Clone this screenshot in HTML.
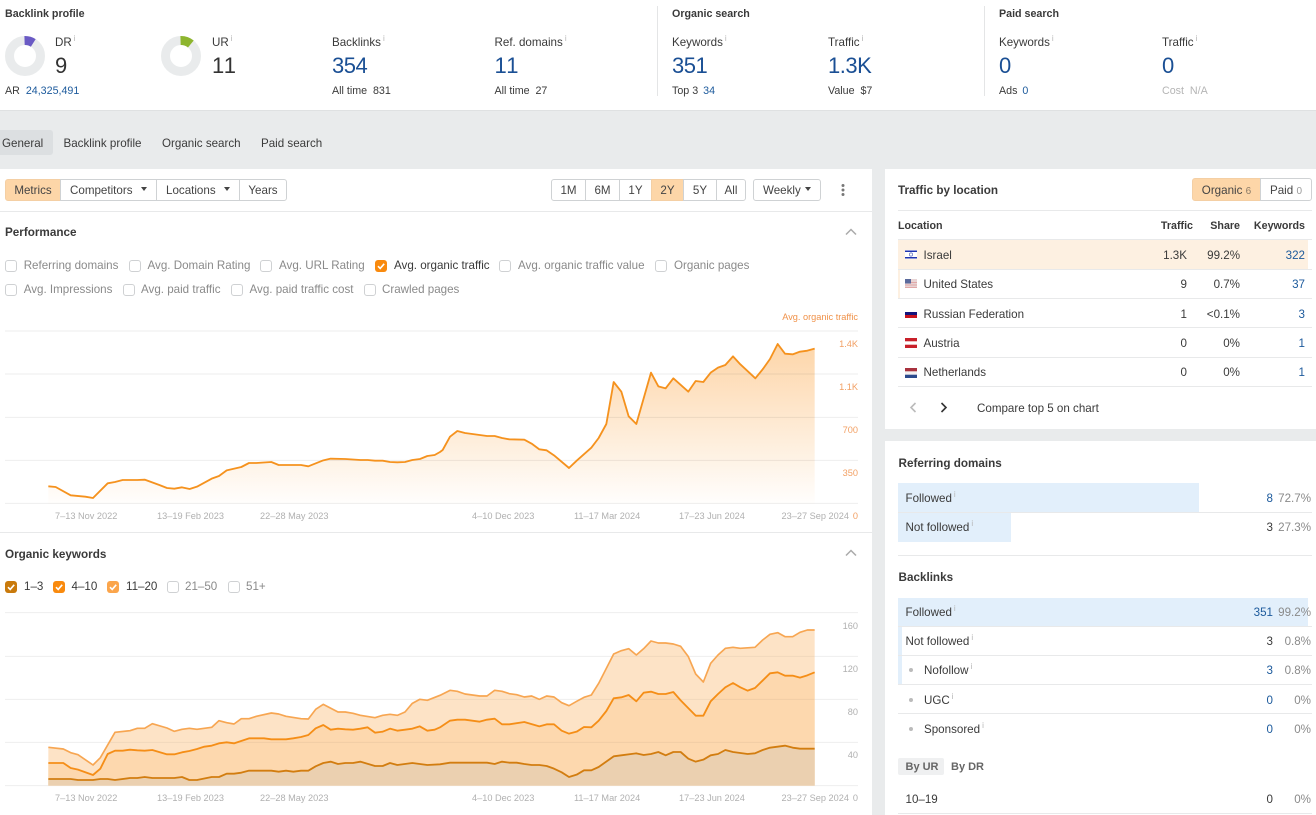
<!DOCTYPE html>
<html><head><meta charset="utf-8"><style>
html,body{margin:0;padding:0}
body{width:1316px;height:815px;overflow:hidden;background:#e9ebec;position:relative;font-family:"Liberation Sans",Arial,sans-serif;font-size:11.6px;color:#3a3a3a}
.b{position:absolute;box-sizing:border-box}
.t{position:absolute;line-height:16px;white-space:nowrap;margin-top:1px}
.r{text-align:right;transform:translateX(-100%)}
.h{font-weight:bold;color:#3a3a3a;font-size:11.7px}
.h2{font-size:10.7px;margin-top:0}
.m{font-size:10.7px;margin-top:0}
.big{font-size:22px;line-height:26px;color:#333;font-kerning:none;letter-spacing:-.5px;margin-top:0}
.bl{color:#1a4f94}
.l{color:#1c5a9c}
.g{color:#8a8a8a}
.s{font-size:9.2px;color:#b0b0b0;margin-top:0}
.o{color:#f2a064}
.i{font-size:8px;color:#b5b5b5;position:relative;top:-5px;margin-left:2px}
.cb{position:absolute;width:12px;height:12px;box-sizing:border-box;border:1px solid #cfd1d3;border-radius:3px;background:#fff}
.ck{border:0}
.ck svg{display:block}
.btn{position:absolute;box-sizing:border-box;height:22px;background:#fff;border:1px solid #cfd2d4;line-height:22px;text-align:center;color:#444}
.ln{position:absolute;height:1px;background:#e8e9ea}
.sel{background:#fdd6a8}
.fl{position:absolute;left:905px;width:12px}
.dot{position:absolute;width:4px;height:4px;border-radius:2px;background:#bbb;left:909px}
</style></head><body>
<div class="b" style="left:0;top:0;width:1316px;height:111px;background:#fff;border-bottom:1px solid #dfe1e2"></div>
<div class="b" style="left:657px;top:6px;width:1px;height:90px;background:#e4e5e6"></div>
<div class="b" style="left:984px;top:6px;width:1px;height:90px;background:#e4e5e6"></div>

<svg class="b" style="left:0;top:30px" width="210" height="52" viewBox="0 0 210 52">
<circle cx="25" cy="26" r="15.5" fill="none" stroke="#e9ebec" stroke-width="9"/>
<circle cx="25" cy="26" r="15.5" fill="none" stroke="#6a5ac4" stroke-width="9" pathLength="100" stroke-dasharray="9 91" transform="rotate(-90 25 26)"/>
<circle cx="181" cy="26" r="15.5" fill="none" stroke="#e9ebec" stroke-width="9"/>
<circle cx="181" cy="26" r="15.5" fill="none" stroke="#8db52e" stroke-width="9" pathLength="100" stroke-dasharray="11 89" transform="rotate(-90 181 26)"/>
</svg>

<div class="t h h2" style="left:5px;top:6px">Backlink profile</div>
<div class="t h h2" style="left:672px;top:6px">Organic search</div>
<div class="t h h2" style="left:999px;top:6px">Paid search</div>

<div class="t" style="left:55px;top:34px">DR<span class="i">i</span></div>
<div class="t big" style="left:55px;top:53px">9</div>
<div class="t m" style="left:5px;top:83px">AR <span class="l" style="margin-left:3px">24,325,491</span></div>
<div class="t" style="left:212px;top:34px">UR<span class="i">i</span></div>
<div class="t big" style="left:212px;top:53px">11</div>
<div class="t" style="left:332px;top:34px">Backlinks<span class="i">i</span></div>
<div class="t big bl" style="left:332px;top:53px">354</div>
<div class="t m" style="left:332px;top:83px">All time&nbsp; 831</div>
<div class="t" style="left:494.5px;top:34px">Ref. domains<span class="i">i</span></div>
<div class="t big bl" style="left:494.5px;top:53px">11</div>
<div class="t m" style="left:494.5px;top:83px">All time&nbsp; 27</div>
<div class="t" style="left:672px;top:34px">Keywords<span class="i">i</span></div>
<div class="t big bl" style="left:672px;top:53px">351</div>
<div class="t m" style="left:672px;top:83px">Top 3 <span class="l" style="margin-left:2px">34</span></div>
<div class="t" style="left:828px;top:34px">Traffic<span class="i">i</span></div>
<div class="t big bl" style="left:828px;top:53px">1.3K</div>
<div class="t m" style="left:828px;top:83px">Value&nbsp; $7</div>
<div class="t" style="left:999px;top:34px">Keywords<span class="i">i</span></div>
<div class="t big bl" style="left:999px;top:53px">0</div>
<div class="t m" style="left:999px;top:83px">Ads <span class="l" style="margin-left:2px">0</span></div>
<div class="t" style="left:1162px;top:34px">Traffic<span class="i">i</span></div>
<div class="t big bl" style="left:1162px;top:53px">0</div>
<div class="t m" style="left:1162px;top:83px;color:#b5b5b5">Cost&nbsp; N/A</div>

<div class="b" style="left:0;top:130px;width:53px;height:25px;background:#dcdfe1;border-radius:0 3px 3px 0"></div>
<div class="t" style="left:2px;top:135px">General</div>
<div class="t" style="left:63.5px;top:135px">Backlink profile</div>
<div class="t" style="left:162px;top:135px">Organic search</div>
<div class="t" style="left:261px;top:135px">Paid search</div>

<div class="b" style="left:0;top:169px;width:872px;height:646px;background:#fff"></div>
<div class="b" style="left:885px;top:169px;width:431px;height:260px;background:#fff"></div>
<div class="b" style="left:885px;top:441px;width:431px;height:374px;background:#fff"></div>

<div class="btn sel" style="left:5px;top:179px;width:56px;border-radius:3px 0 0 3px;border-color:#f4cfa4">Metrics</div>
<div class="btn" style="left:60px;top:179px;width:97px;text-align:left;padding-left:9px">Competitors</div>
<div class="btn" style="left:156px;top:179px;width:84px;text-align:left;padding-left:9px">Locations</div>
<div class="btn" style="left:239px;top:179px;width:48px;border-radius:0 3px 3px 0">Years</div>
<svg class="b" style="left:141px;top:187px" width="6" height="4"><path d="M0 0H6L3 4Z" fill="#444"/></svg>
<svg class="b" style="left:224px;top:187px" width="6" height="4"><path d="M0 0H6L3 4Z" fill="#444"/></svg>
<div class="btn" style="left:551px;top:179px;width:35px;border-radius:3px 0 0 3px">1M</div>
<div class="btn" style="left:585px;top:179px;width:35px">6M</div>
<div class="btn" style="left:619px;top:179px;width:33px">1Y</div>
<div class="btn sel" style="left:651px;top:179px;width:33px;border-color:#f4cfa4">2Y</div>
<div class="btn" style="left:683px;top:179px;width:34px">5Y</div>
<div class="btn" style="left:716px;top:179px;width:30px;border-radius:0 3px 3px 0">All</div>
<div class="btn" style="left:753px;top:179px;width:68px;border-radius:3px;text-align:left;padding-left:9px">Weekly</div>
<svg class="b" style="left:805px;top:187px" width="6" height="4"><path d="M0 0H6L3 4Z" fill="#444"/></svg>
<svg class="b" style="left:840px;top:183px" width="6" height="14"><circle cx="3" cy="2.5" r="1.5" fill="#777"/><circle cx="3" cy="7" r="1.5" fill="#777"/><circle cx="3" cy="11.5" r="1.5" fill="#777"/></svg>

<div class="ln" style="left:0;top:211px;width:872px"></div>
<div class="t h" style="left:5px;top:224px">Performance</div>
<svg class="b" style="left:845px;top:228px" width="12" height="8"><path d="M1 6.5L6 1.5L11 6.5" fill="none" stroke="#aaa" stroke-width="1.5"/></svg>

<div class="cb" style="left:5px;top:260px"></div><div class="t g" style="left:23.7px;top:257px">Referring domains</div>
<div class="cb" style="left:129px;top:260px"></div><div class="t g" style="left:147.5px;top:257px">Avg. Domain Rating</div>
<div class="cb" style="left:260px;top:260px"></div><div class="t g" style="left:279px;top:257px">Avg. URL Rating</div>
<div class="cb ck" style="left:375px;top:260px;background:#f98a0e"><svg width="12" height="12"><path d="M3 6.2L5.2 8.4L9.2 3.8" fill="none" stroke="#fff" stroke-width="1.6"/></svg></div><div class="t" style="left:394px;top:257px">Avg. organic traffic</div>
<div class="cb" style="left:499px;top:260px"></div><div class="t g" style="left:518px;top:257px">Avg. organic traffic value</div>
<div class="cb" style="left:655px;top:260px"></div><div class="t g" style="left:674px;top:257px">Organic pages</div>
<div class="cb" style="left:5px;top:284px"></div><div class="t g" style="left:23.7px;top:281px">Avg. Impressions</div>
<div class="cb" style="left:123px;top:284px"></div><div class="t g" style="left:141px;top:281px">Avg. paid traffic</div>
<div class="cb" style="left:231px;top:284px"></div><div class="t g" style="left:249.5px;top:281px">Avg. paid traffic cost</div>
<div class="cb" style="left:364px;top:284px"></div><div class="t g" style="left:382px;top:281px">Crawled pages</div>

<svg class="b" style="left:0;top:0" width="1316" height="815" viewBox="0 0 3948 2445">
<defs><linearGradient id="gr" gradientUnits="userSpaceOnUse" x1="0" y1="1040" x2="0" y2="1510"><stop offset="0" stop-color="#fdd6aa"/><stop offset="1" stop-color="#fdd6aa" stop-opacity=".03"/></linearGradient>
<clipPath id="c2"><path d="M145 2357L145 2242 190 2247 212 2258 234 2264 279 2295 301 2273 345 2197 390 2192 412 2185 434 2185 457 2171 501 2184 523 2194 546 2188 568 2185 591 2188 635 2182 657 2162 680 2168 702 2172 724 2156 747 2156 769 2149 814 2139 836 2142 858 2149 903 2156 925 2157 947 2128 970 2113 1014 2136 1036 2136 1059 2140 1081 2146 1125 2153 1148 2146 1170 2143 1192 2146 1215 2136 1237 2110 1259 2098 1282 2101 1320 2086 1350 2071 1372 2074 1395 2082 1439 2088 1461 2088 1484 2071 1506 2074 1528 2081 1550 2084 1573 2091 1595 2088 1618 2098 1640 2088 1662 2091 1685 2108 1707 2117 1730 2104 1752 2092 1774 2085 1796 2050 1841 1962 1864 1952 1886 1946 1909 1965 1931 1946 1953 1923 1975 1929 1997 1929 2020 1932 2042 1939 2065 1970 2087 2022 2110 2046 2132 1990 2154 1965 2176 1945 2199 1942 2221 1945 2265 1942 2288 1920 2310 1903 2333 1898 2355 1910 2378 1910 2400 1897 2422 1890 2444 1890 2444 2357Z"/></clipPath></defs>
<path fill="url(#gr)" d="M145 1510L145 1459 167 1461 212 1486 256 1490 279 1494 323 1450 345 1446 368 1440 412 1440 434 1439 478 1455 501 1464 523 1466 546 1462 569 1467 591 1460 635 1436 657 1428 680 1411 724 1401 747 1389 769 1389 814 1386 836 1395 858 1395 903 1395 925 1399 970 1381 992 1376 1036 1377 1081 1380 1103 1380 1125 1382 1148 1382 1170 1386 1192 1387 1215 1386 1237 1380 1260 1377 1282 1368 1304 1365 1320 1356 1328 1350 1350 1310 1372 1293 1395 1299 1417 1302 1439 1305 1461 1308 1484 1308 1506 1314 1528 1318 1573 1319 1595 1331 1618 1348 1640 1351 1662 1366 1707 1404 1730 1382 1774 1343 1796 1314 1819 1272 1841 1146 1864 1175 1886 1249 1909 1272 1953 1118 1975 1159 1997 1165 2020 1135 2065 1175 2087 1143 2110 1146 2132 1118 2154 1103 2176 1095 2199 1069 2221 1093 2266 1135 2288 1108 2310 1077 2333 1032 2355 1061 2378 1063 2400 1055 2422 1052 2444 1046 2444 1510Z"/>
<g stroke="#000" stroke-opacity=".07" stroke-width="3">
<path d="M15 993H2574M15 1122H2574M15 1252H2574M15 1381H2574M15 1510H2574"/>
<path d="M15 1838H2574M15 1969H2574M15 2098H2574M15 2227H2574M15 2357H2574"/>
</g>
<path fill="none" stroke="#f5921e" stroke-width="5.5" stroke-linejoin="round" d="M145 1459 167 1461 212 1486 256 1490 279 1494 323 1450 345 1446 368 1440 412 1440 434 1439 478 1455 501 1464 523 1466 546 1462 569 1467 591 1460 635 1436 657 1428 680 1411 724 1401 747 1389 769 1389 814 1386 836 1395 858 1395 903 1395 925 1399 970 1381 992 1376 1036 1377 1081 1380 1103 1380 1125 1382 1148 1382 1170 1386 1192 1387 1215 1386 1237 1380 1260 1377 1282 1368 1304 1365 1320 1356 1328 1350 1350 1310 1372 1293 1395 1299 1417 1302 1439 1305 1461 1308 1484 1308 1506 1314 1528 1318 1573 1319 1595 1331 1618 1348 1640 1351 1662 1366 1707 1404 1730 1382 1774 1343 1796 1314 1819 1272 1841 1146 1864 1175 1886 1249 1909 1272 1953 1118 1975 1159 1997 1165 2020 1135 2065 1175 2087 1143 2110 1146 2132 1118 2154 1103 2176 1095 2199 1069 2221 1093 2266 1135 2288 1108 2310 1077 2333 1032 2355 1061 2378 1063 2400 1055 2422 1052 2444 1046"/>
<path fill="#fde3c6" d="M145 2357L145 2242 190 2247 212 2258 234 2264 279 2295 301 2273 345 2197 390 2192 412 2185 434 2185 457 2171 501 2184 523 2194 546 2188 568 2185 591 2188 635 2182 657 2162 680 2168 702 2172 724 2156 747 2156 769 2149 814 2139 836 2142 858 2149 903 2156 925 2157 947 2128 970 2113 1014 2136 1036 2136 1059 2140 1081 2146 1125 2153 1148 2146 1170 2143 1192 2146 1215 2136 1237 2110 1259 2098 1282 2101 1320 2086 1350 2071 1372 2074 1395 2082 1439 2088 1461 2088 1484 2071 1506 2074 1528 2081 1550 2084 1573 2091 1595 2088 1618 2098 1640 2088 1662 2091 1685 2108 1707 2117 1730 2104 1752 2092 1774 2085 1796 2050 1841 1962 1864 1952 1886 1946 1909 1965 1931 1946 1953 1923 1975 1929 1997 1929 2020 1932 2042 1939 2065 1970 2087 2022 2110 2046 2132 1990 2154 1965 2176 1945 2199 1942 2221 1945 2265 1942 2288 1920 2310 1903 2333 1898 2355 1910 2378 1910 2400 1897 2422 1890 2444 1890 2444 2357Z"/>
<path fill="#fdd8ae" d="M145 2357L145 2289 190 2289 212 2304 234 2309 279 2325 301 2306 323 2262 345 2252 368 2252 390 2249 412 2251 434 2252 457 2250 501 2263 523 2263 546 2257 568 2253 591 2247 613 2240 635 2237 657 2230 680 2227 702 2230 747 2215 792 2215 814 2218 858 2218 880 2215 903 2211 925 2205 947 2185 970 2175 992 2189 1014 2186 1036 2188 1059 2189 1081 2186 1103 2182 1125 2198 1148 2195 1170 2186 1192 2192 1215 2189 1237 2186 1259 2179 1282 2192 1304 2189 1320 2182 1350 2162 1372 2159 1395 2159 1417 2162 1439 2165 1461 2159 1484 2156 1506 2173 1528 2173 1573 2166 1618 2179 1640 2173 1662 2173 1685 2192 1707 2201 1730 2195 1752 2181 1774 2182 1796 2162 1819 2133 1841 2095 1864 2092 1886 2085 1909 2104 1931 2078 1953 2075 1975 2082 1997 2082 2020 2076 2042 2101 2087 2147 2110 2147 2132 2104 2154 2082 2176 2062 2199 2049 2221 2062 2243 2072 2265 2064 2310 2020 2333 2017 2355 2027 2378 2027 2400 2033 2422 2026 2444 2017 2444 2357Z"/>
<path fill="#ebd0b0" d="M145 2357L145 2337 212 2337 234 2340 279 2340 301 2337 323 2337 345 2340 390 2334 412 2334 434 2331 457 2334 523 2334 546 2331 568 2340 591 2340 635 2331 657 2331 680 2321 702 2321 724 2318 747 2312 814 2312 836 2315 858 2312 880 2315 903 2312 925 2312 947 2299 970 2289 992 2285 1014 2292 1036 2289 1059 2289 1081 2285 1125 2298 1148 2298 1170 2289 1192 2295 1237 2289 1282 2295 1320 2293 1350 2288 1461 2288 1484 2292 1506 2285 1528 2288 1550 2288 1573 2292 1595 2295 1618 2295 1640 2298 1662 2306 1685 2317 1707 2331 1730 2324 1752 2311 1774 2311 1796 2301 1841 2269 1864 2266 1909 2260 1931 2265 1953 2262 1975 2256 1997 2266 2020 2256 2042 2256 2065 2276 2087 2285 2110 2279 2132 2266 2154 2262 2176 2250 2199 2256 2243 2262 2265 2260 2288 2250 2310 2243 2355 2237 2378 2243 2400 2246 2444 2246 2444 2357Z"/>
<path clip-path="url(#c2)" stroke="#000" stroke-opacity=".05" stroke-width="3" d="M145 1969H2444M145 2098H2444M145 2227H2444"/>
<path fill="none" stroke="#f7a652" stroke-width="5" stroke-linejoin="round" d="M145 2242 190 2247 212 2258 234 2264 279 2295 301 2273 345 2197 390 2192 412 2185 434 2185 457 2171 501 2184 523 2194 546 2188 568 2185 591 2188 635 2182 657 2162 680 2168 702 2172 724 2156 747 2156 769 2149 814 2139 836 2142 858 2149 903 2156 925 2157 947 2128 970 2113 1014 2136 1036 2136 1059 2140 1081 2146 1125 2153 1148 2146 1170 2143 1192 2146 1215 2136 1237 2110 1259 2098 1282 2101 1320 2086 1350 2071 1372 2074 1395 2082 1439 2088 1461 2088 1484 2071 1506 2074 1528 2081 1550 2084 1573 2091 1595 2088 1618 2098 1640 2088 1662 2091 1685 2108 1707 2117 1730 2104 1752 2092 1774 2085 1796 2050 1841 1962 1864 1952 1886 1946 1909 1965 1931 1946 1953 1923 1975 1929 1997 1929 2020 1932 2042 1939 2065 1970 2087 2022 2110 2046 2132 1990 2154 1965 2176 1945 2199 1942 2221 1945 2265 1942 2288 1920 2310 1903 2333 1898 2355 1910 2378 1910 2400 1897 2422 1890 2444 1890"/>
<path fill="none" stroke="#f58e17" stroke-width="5.5" stroke-linejoin="round" d="M145 2289 190 2289 212 2304 234 2309 279 2325 301 2306 323 2262 345 2252 368 2252 390 2249 412 2251 434 2252 457 2250 501 2263 523 2263 546 2257 568 2253 591 2247 613 2240 635 2237 657 2230 680 2227 702 2230 747 2215 792 2215 814 2218 858 2218 880 2215 903 2211 925 2205 947 2185 970 2175 992 2189 1014 2186 1036 2188 1059 2189 1081 2186 1103 2182 1125 2198 1148 2195 1170 2186 1192 2192 1215 2189 1237 2186 1259 2179 1282 2192 1304 2189 1320 2182 1350 2162 1372 2159 1395 2159 1417 2162 1439 2165 1461 2159 1484 2156 1506 2173 1528 2173 1573 2166 1618 2179 1640 2173 1662 2173 1685 2192 1707 2201 1730 2195 1752 2181 1774 2182 1796 2162 1819 2133 1841 2095 1864 2092 1886 2085 1909 2104 1931 2078 1953 2075 1975 2082 1997 2082 2020 2076 2042 2101 2087 2147 2110 2147 2132 2104 2154 2082 2176 2062 2199 2049 2221 2062 2243 2072 2265 2064 2310 2020 2333 2017 2355 2027 2378 2027 2400 2033 2422 2026 2444 2017"/>
<path fill="none" stroke="#d27d10" stroke-width="5.5" stroke-linejoin="round" d="M145 2337 212 2337 234 2340 279 2340 301 2337 323 2337 345 2340 390 2334 412 2334 434 2331 457 2334 523 2334 546 2331 568 2340 591 2340 635 2331 657 2331 680 2321 702 2321 724 2318 747 2312 814 2312 836 2315 858 2312 880 2315 903 2312 925 2312 947 2299 970 2289 992 2285 1014 2292 1036 2289 1059 2289 1081 2285 1125 2298 1148 2298 1170 2289 1192 2295 1237 2289 1282 2295 1320 2293 1350 2288 1461 2288 1484 2292 1506 2285 1528 2288 1550 2288 1573 2292 1595 2295 1618 2295 1640 2298 1662 2306 1685 2317 1707 2331 1730 2324 1752 2311 1774 2311 1796 2301 1841 2269 1864 2266 1909 2260 1931 2265 1953 2262 1975 2256 1997 2266 2020 2256 2042 2256 2065 2276 2087 2285 2110 2279 2132 2266 2154 2262 2176 2250 2199 2256 2243 2262 2265 2260 2288 2250 2310 2243 2355 2237 2378 2243 2400 2246 2444 2246"/>
</svg>

<div class="t r s o" style="left:858px;top:309px;color:#f0924a">Avg. organic traffic</div>
<div class="t r s o" style="left:858px;top:336px">1.4K</div>
<div class="t r s o" style="left:858px;top:379px">1.1K</div>
<div class="t r s o" style="left:858px;top:422px">700</div>
<div class="t r s o" style="left:858px;top:465px">350</div>
<div class="t r s o" style="left:858px;top:508px">0</div>
<div class="t s" style="left:55px;top:508px">7–13 Nov 2022</div>
<div class="t s" style="left:157px;top:508px">13–19 Feb 2023</div>
<div class="t s" style="left:260px;top:508px">22–28 May 2023</div>
<div class="t s" style="left:472px;top:508px">4–10 Dec 2023</div>
<div class="t s" style="left:574px;top:508px">11–17 Mar 2024</div>
<div class="t s" style="left:679px;top:508px">17–23 Jun 2024</div>
<div class="t s" style="left:781.5px;top:508px">23–27 Sep 2024</div>

<div class="ln" style="left:0;top:532px;width:872px"></div>
<div class="t h" style="left:5px;top:546px">Organic keywords</div>
<svg class="b" style="left:845px;top:549px" width="12" height="8"><path d="M1 6.5L6 1.5L11 6.5" fill="none" stroke="#aaa" stroke-width="1.5"/></svg>

<div class="cb ck" style="left:5px;top:581px;background:#c97a0c"><svg width="12" height="12"><path d="M3 6.2L5.2 8.4L9.2 3.8" fill="none" stroke="#fff" stroke-width="1.6"/></svg></div><div class="t" style="left:24px;top:578px">1–3</div>
<div class="cb ck" style="left:53px;top:581px;background:#f98a0e"><svg width="12" height="12"><path d="M3 6.2L5.2 8.4L9.2 3.8" fill="none" stroke="#fff" stroke-width="1.6"/></svg></div><div class="t" style="left:71.5px;top:578px">4–10</div>
<div class="cb ck" style="left:107px;top:581px;background:#fba54b"><svg width="12" height="12"><path d="M3 6.2L5.2 8.4L9.2 3.8" fill="none" stroke="#fff" stroke-width="1.6"/></svg></div><div class="t" style="left:126px;top:578px">11–20</div>
<div class="cb" style="left:167px;top:581px"></div><div class="t g" style="left:185px;top:578px">21–50</div>
<div class="cb" style="left:228px;top:581px"></div><div class="t g" style="left:246px;top:578px">51+</div>

<div class="t r s" style="left:858px;top:618px">160</div>
<div class="t r s" style="left:858px;top:661px">120</div>
<div class="t r s" style="left:858px;top:704px">80</div>
<div class="t r s" style="left:858px;top:747px">40</div>
<div class="t r s" style="left:858px;top:790px">0</div>
<div class="t s" style="left:55px;top:790px">7–13 Nov 2022</div>
<div class="t s" style="left:157px;top:790px">13–19 Feb 2023</div>
<div class="t s" style="left:260px;top:790px">22–28 May 2023</div>
<div class="t s" style="left:472px;top:790px">4–10 Dec 2023</div>
<div class="t s" style="left:574px;top:790px">11–17 Mar 2024</div>
<div class="t s" style="left:679px;top:790px">17–23 Jun 2024</div>
<div class="t s" style="left:781.5px;top:790px">23–27 Sep 2024</div>

<div class="t h" style="left:898px;top:182px">Traffic by location</div>
<div class="btn sel" style="left:1192px;top:178px;width:69px;height:23px;border-radius:3px 0 0 3px;border-color:#f4cfa4;line-height:23px">Organic <span style="font-size:10px;color:#8a7a66">6</span></div>
<div class="btn" style="left:1260px;top:178px;width:52px;height:23px;border-radius:0 3px 3px 0;line-height:23px">Paid <span style="font-size:10px;color:#999">0</span></div>
<div class="ln" style="left:898px;top:210px;width:414px"></div>
<div class="t h h2" style="left:898px;top:217.5px">Location</div>
<div class="t h h2 r" style="left:1193px;top:217.5px">Traffic</div>
<div class="t h h2 r" style="left:1240px;top:217.5px">Share</div>
<div class="t h h2 r" style="left:1305px;top:217.5px">Keywords</div>
<div class="ln" style="left:898px;top:239px;width:414px"></div>
<div class="b" style="left:898px;top:240px;width:410px;height:29px;background:#fdf0e1"></div>
<div class="b" style="left:898px;top:270px;width:2px;height:28px;background:#fdf0e1"></div>
<div class="ln" style="left:898px;top:269px;width:414px"></div>
<div class="ln" style="left:898px;top:298px;width:414px"></div>
<div class="ln" style="left:898px;top:327px;width:414px"></div>
<div class="ln" style="left:898px;top:357px;width:414px"></div>
<div class="ln" style="left:898px;top:386px;width:414px"></div>

<svg class="fl" style="top:250px" width="12" height="9"><rect width="12" height="9" fill="#fff"/><rect y="0.5" width="12" height="1.5" fill="#1f33b0"/><rect y="7" width="12" height="1.5" fill="#1f33b0"/><circle cx="6" cy="4.5" r="1.6" fill="none" stroke="#5a6ac0" stroke-width=".7"/></svg>
<svg class="fl" style="top:279px" width="12" height="9"><rect width="12" height="9" fill="#e8d4d4"/><rect y="3" width="12" height="1" fill="#e0a8a8"/><rect y="5.5" width="12" height="1" fill="#e0a8a8"/><rect y="8" width="12" height="1" fill="#e0a8a8"/><rect width="6" height="4.5" fill="#5b6a9c"/></svg>
<svg class="fl" style="top:309px" width="12" height="9"><rect width="12" height="3" y="0" fill="#fff"/><rect y="3" width="12" height="3" fill="#14147c"/><rect y="6" width="12" height="3" fill="#c8141e"/></svg>
<svg class="fl" style="top:338px" width="12" height="10"><rect width="12" height="10" fill="#fff"/><rect width="12" height="3.3" fill="#c8202a"/><rect y="6.7" width="12" height="3.3" fill="#c8202a"/></svg>
<svg class="fl" style="top:367.5px" width="12" height="10"><rect width="12" height="10" fill="#f4f0f0"/><rect width="12" height="3.3" fill="#a8323e"/><rect y="6.7" width="12" height="3.3" fill="#2b4a8c"/></svg>

<div class="t" style="left:923.5px;top:247px">Israel</div><div class="t r" style="left:1187px;top:247px">1.3K</div><div class="t r" style="left:1240px;top:247px">99.2%</div><div class="t r l" style="left:1305px;top:247px">322</div>
<div class="t" style="left:923.5px;top:276px">United States</div><div class="t r" style="left:1187px;top:276px">9</div><div class="t r" style="left:1240px;top:276px">0.7%</div><div class="t r l" style="left:1305px;top:276px">37</div>
<div class="t" style="left:923.5px;top:306px">Russian Federation</div><div class="t r" style="left:1187px;top:306px">1</div><div class="t r" style="left:1240px;top:306px">&lt;0.1%</div><div class="t r l" style="left:1305px;top:306px">3</div>
<div class="t" style="left:923.5px;top:335px">Austria</div><div class="t r" style="left:1187px;top:335px">0</div><div class="t r" style="left:1240px;top:335px">0%</div><div class="t r l" style="left:1305px;top:335px">1</div>
<div class="t" style="left:923.5px;top:364px">Netherlands</div><div class="t r" style="left:1187px;top:364px">0</div><div class="t r" style="left:1240px;top:364px">0%</div><div class="t r l" style="left:1305px;top:364px">1</div>

<svg class="b" style="left:909px;top:402px" width="8" height="11"><path d="M6.5 1L2 5.5L6.5 10" fill="none" stroke="#bbb" stroke-width="1.6"/></svg>
<svg class="b" style="left:940px;top:402px" width="8" height="11"><path d="M1.5 1L6 5.5L1.5 10" fill="none" stroke="#333" stroke-width="1.6"/></svg>
<div class="t" style="left:977px;top:400px">Compare top 5 on chart</div>

<div class="t h" style="left:898.5px;top:455px">Referring domains</div>
<div class="b" style="left:898px;top:483px;width:301px;height:29px;background:#e2effb"></div>
<div class="b" style="left:898px;top:513px;width:113px;height:29px;background:#e2effb"></div>
<div class="ln" style="left:898px;top:512px;width:414px"></div>
<div class="t" style="left:905.5px;top:490px">Followed<span class="i">i</span></div><div class="t r l" style="left:1273px;top:490px">8</div><div class="t r g" style="left:1311px;top:490px">72.7%</div>
<div class="t" style="left:905.5px;top:519px">Not followed<span class="i">i</span></div><div class="t r" style="left:1273px;top:519px">3</div><div class="t r g" style="left:1311px;top:519px">27.3%</div>
<div class="ln" style="left:898px;top:555px;width:414px"></div>

<div class="t h" style="left:898.5px;top:569px">Backlinks</div>
<div class="b" style="left:898px;top:598px;width:410px;height:28px;background:#e2effb"></div>
<div class="b" style="left:898px;top:627px;width:4px;height:57px;background:#e2effb"></div>
<div class="ln" style="left:898px;top:626px;width:414px"></div>
<div class="ln" style="left:898px;top:655px;width:414px"></div>
<div class="ln" style="left:898px;top:684px;width:414px"></div>
<div class="ln" style="left:898px;top:713px;width:414px"></div>
<div class="t" style="left:905.5px;top:604px">Followed<span class="i">i</span></div><div class="t r l" style="left:1273px;top:604px">351</div><div class="t r g" style="left:1311px;top:604px">99.2%</div>
<div class="t" style="left:905.5px;top:633px">Not followed<span class="i">i</span></div><div class="t r" style="left:1273px;top:633px">3</div><div class="t r g" style="left:1311px;top:633px">0.8%</div>
<div class="dot" style="top:668px"></div><div class="t" style="left:924px;top:662px">Nofollow<span class="i">i</span></div><div class="t r l" style="left:1273px;top:662px">3</div><div class="t r g" style="left:1311px;top:662px">0.8%</div>
<div class="dot" style="top:698px"></div><div class="t" style="left:924px;top:692px">UGC<span class="i">i</span></div><div class="t r l" style="left:1273px;top:692px">0</div><div class="t r g" style="left:1311px;top:692px">0%</div>
<div class="dot" style="top:727px"></div><div class="t" style="left:924px;top:721px">Sponsored<span class="i">i</span></div><div class="t r l" style="left:1273px;top:721px">0</div><div class="t r g" style="left:1311px;top:721px">0%</div>

<div class="b" style="left:898px;top:758px;width:46px;height:17px;background:#eff0f1;border-radius:2px"></div>
<div class="t" style="left:905.5px;top:759px;margin-top:0;font-size:11px;font-weight:bold;color:#666">By UR</div>
<div class="t" style="left:951px;top:759px;margin-top:0;font-size:11px;font-weight:bold;color:#666">By DR</div>
<div class="t" style="left:905.5px;top:791px">10–19</div><div class="t r" style="left:1273px;top:791px">0</div><div class="t r g" style="left:1311px;top:791px">0%</div>
<div class="ln" style="left:898px;top:813px;width:414px"></div>
</body></html>
